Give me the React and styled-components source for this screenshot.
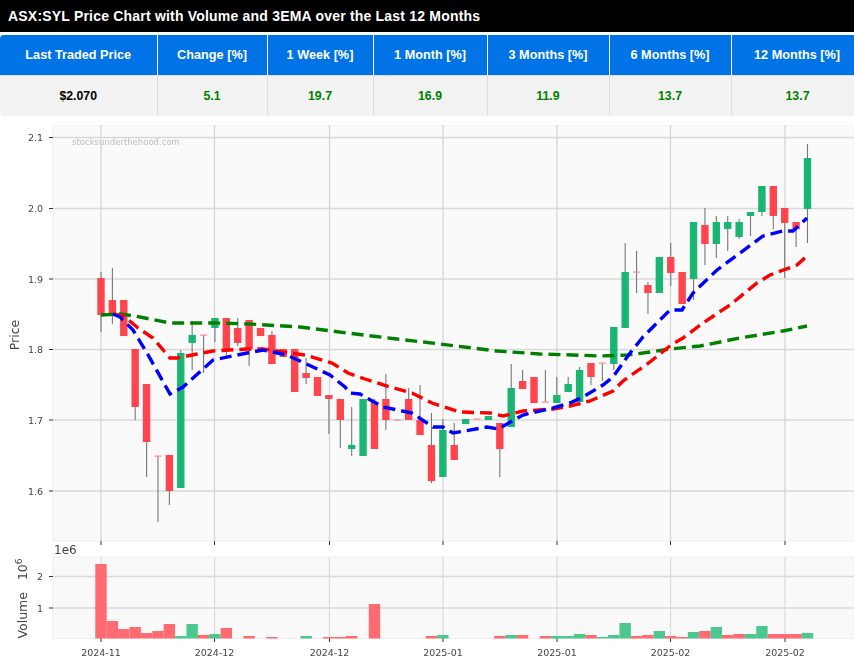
import React from "react";
import styled, { createGlobalStyle } from "styled-components";

const Global = createGlobalStyle`
  html, body { margin: 0; padding: 0; background: #fff; overflow: hidden; }
  body { font-family: "Liberation Sans", Arial, sans-serif; }
`;

const Page = styled.div`
  width: 854px;
  height: 663px;
  display: flex;
  flex-direction: column;
  overflow: hidden;
`;

const TitleBar = styled.h1`
  margin: 0 0 3px;
  height: 32px;
  padding: 0 8px;
  display: flex;
  align-items: center;
  background: #000;
  color: #fff;
  font-size: 14px;
  font-weight: 700;
  letter-spacing: 0.2px;
  white-space: nowrap;
`;

const Table = styled.div`
  display: grid;
  width: 863.5px;
  grid-template-columns: 157.5px 110px 106px 114px 122px 122px 132px;
  grid-auto-rows: 40.5px;
  margin-bottom: 9px;
  border-radius: 4px 0 0 4px;
  overflow: hidden;
  font-size: 12.7px;
  font-weight: 700;
`;

const HeadCell = styled.div`
  display: flex;
  align-items: center;
  justify-content: center;
  background: #0073e6;
  color: #fff;
  border-right: 1px solid #fff;
  border-bottom: 1px solid #ddd;
  &:last-of-type { border-right: 0; }
`;

const ValueCell = styled.div`
  display: flex;
  align-items: center;
  justify-content: center;
  background: #f2f2f2;
  color: ${(p) => (p.$price ? "#000" : "#008000")};
  border-right: 1px solid #ddd;
  font-size: 12.3px;
  &:last-child { border-right: 0; }
`;

const ChartFigure = styled.svg`
  display: block;
  flex: none;
  width: 854px;
  height: 538px;
  filter: blur(0.35px);
`;

const headers = ["Last Traded Price", "Change [%]", "1 Week [%]", "1 Month [%]", "3 Months [%]", "6 Months [%]", "12 Months [%]"];
const values = ["$2.070", "5.1", "19.7", "16.9", "11.9", "13.7", "13.7"];

const TOP = 125;
const RED = "#ff4048";
const GREEN = "#12b56e";
const xOf = (i) => 101 + i * 11.395;

// [color, bodyTop, bodyBottom, wickTop, wickBottom] in page pixels
const candles = [
  ["r", 278, 315, 272, 332], ["r", 300, 315, 268, 324], ["r", 300, 336], ["r", 349, 407, 349, 420],
  ["r", 384, 442, 384, 477], ["d", 456, 456, 456, 522], ["r", 455, 491, 455, 505], ["g", 353, 488, 350, 488],
  ["g", 335, 343, 321, 370], ["d", 335, 335, 335, 373], ["g", 318, 328, 318, 342], ["r", 318, 349, 318, 358],
  ["r", 328, 343, 318, 346], ["r", 320, 349, 320, 366], ["r", 328, 336], ["r", 335, 364, 331, 364],
  ["r", 349, 357], ["r", 349, 392], ["r", 373, 378, 358, 384], ["r", 377, 396],
  ["r", 395, 399, 395, 434], ["r", 399, 420, 399, 448], ["g", 445, 449, 407, 456], ["g", 399, 456],
  ["r", 402, 449, 399, 449], ["r", 399, 420, 374, 430], ["d", 420, 420], ["r", 399, 420, 388, 420],
  ["r", 420, 435, 385, 435], ["r", 445, 481, 413, 483], ["g", 430, 477, 419, 477], ["r", 445, 460, 423, 460],
  ["g", 419, 424], ["d", 419, 419], ["g", 416, 420], ["r", 423, 449, 423, 477],
  ["g", 388, 427, 364, 427], ["r", 381, 389, 370, 389], ["r", 377, 403], ["d", 402, 402, 370, 402],
  ["g", 395, 403, 377, 403], ["g", 384, 392, 377, 392], ["g", 370, 402, 367, 406], ["r", 363, 377, 363, 385],
  ["d", 363, 363, 363, 381], ["g", 327, 364, 327, 370], ["g", 272, 328, 243, 328], ["d", 272, 272, 251, 293],
  ["r", 285, 293, 282, 314], ["g", 257, 293], ["r", 257, 273, 243, 286], ["r", 272, 304],
  ["g", 222, 279, 222, 300], ["r", 225, 244, 208, 265], ["g", 222, 244, 216, 258], ["g", 222, 229, 216, 251],
  ["g", 222, 237, 219, 239], ["g", 212, 216, 212, 236], ["g", 186, 212, 186, 216], ["r", 186, 216, 186, 229],
  ["r", 208, 223, 208, 278], ["r", 222, 229, 222, 247], ["g", 158, 209, 144, 243],
];

const volumes = [
  [0, "r", 564], [1, "r", 621], [2, "r", 629], [3, "r", 627], [4, "r", 633], [5, "r", 631], [6, "r", 624],
  [7, "g", 636], [8, "g", 624], [9, "r", 635], [10, "g", 634], [11, "r", 628], [13, "r", 636], [15, "r", 637],
  [18, "g", 636], [20, "r", 637], [21, "r", 637], [22, "r", 636], [24, "r", 604], [29, "r", 636], [30, "g", 635],
  [35, "r", 636], [36, "g", 635], [37, "r", 635], [39, "r", 636], [40, "g", 636], [41, "g", 636], [42, "g", 634],
  [43, "r", 635], [44, "g", 637], [45, "g", 635], [46, "g", 623], [47, "r", 636], [48, "r", 635], [49, "g", 631],
  [50, "r", 636], [51, "r", 637], [52, "g", 632], [53, "r", 631], [54, "g", 627], [55, "r", 635], [56, "r", 634],
  [57, "g", 634], [58, "g", 626], [59, "r", 634], [60, "r", 634], [61, "r", 634], [62, "g", 633],
];

const blueLine = [[113,314],[120,317],[133,330],[147,353],[170,394],[183,387],[213,360],[247,353],[263,350],[287,355],[300,361],[330,375],[345,387],[350,393],[360,394],[383,407],[412,413],[433,427],[443,427],[453,433],[487,427],[498,429],[523,415],[553,408],[570,403],[583,397],[603,385],[613,377],[630,353],[643,337],[660,320],[670,310],[682,310],[693,293],[717,270],[740,253],[763,236],[783,231],[793,231],[807,218]];
const redLine = [[113,314],[124,316],[138,328],[153,338],[170,358],[177,358],[197,354],[213,351],[247,349],[263,349],[277,351],[290,353],[305,355],[332,363],[348,373],[365,379],[390,387],[412,393],[432,403],[460,412],[490,413],[503,416],[523,411],[553,409],[570,406],[590,401],[613,391],[623,381],[650,362],[671,345],[683,338],[703,323],[730,305],[757,283],[770,275],[797,265],[807,256]];
const greenLine = [[101,315],[120,314],[135,316],[150,319],[170,323],[192,323],[215,323],[250,324],[300,327],[347,333],[397,339],[440,344],[497,351],[540,354],[573,355],[600,356],[628,355],[650,352],[670,349],[700,346],[740,338],[783,331],[807,326]];

const gridX = [
  [101, "2024-11"], [214.5, "2024-12"], [329.5, "2024-12"], [443, "2025-01"],
  [557, "2025-01"], [670.5, "2025-02"], [785, "2025-02"],
];
const priceTicks = [["2.1", 137.5], ["2.0", 208.5], ["1.9", 279], ["1.8", 349.5], ["1.7", 420], ["1.6", 491]];
const volumeTicks = [["2", 576.5], ["1", 608]];

const points = (line) => line.map(([x, y]) => `${x},${y}`).join(" ");
const tickText = { fontFamily: "'DejaVu Sans', sans-serif", fontSize: 9.5, fill: "#444" };
const labelText = { fontFamily: "'DejaVu Sans', sans-serif", fontSize: 12.5, fill: "#444" };

function Chart() {
  return (
    <ChartFigure viewBox={`0 ${TOP} 854 538`}>
      <rect x="53" y="125" width="801" height="416" fill="#fafafa" stroke="#eee" />
      <rect x="53" y="557" width="801" height="81.5" fill="#f9f9f9" stroke="#eee" />

      {priceTicks.map(([t, y]) => (
        <g key={t}>
          <line x1="53" x2="854" y1={y} y2={y} stroke="#d9d9d9" strokeWidth="1.3" />
          <line x1="49" x2="53" y1={y} y2={y} stroke="#333" strokeWidth="1" />
          <text x="28" y={y + 3.5} {...tickText}>{t}</text>
        </g>
      ))}
      {volumeTicks.map(([t, y]) => (
        <g key={t}>
          <line x1="53" x2="854" y1={y} y2={y} stroke="#d9d9d9" strokeWidth="1.3" />
          <line x1="49" x2="53" y1={y} y2={y} stroke="#333" strokeWidth="1" />
          <text x="37" y={y + 3.5} {...tickText}>{t}</text>
        </g>
      ))}
      {gridX.map(([x, label], i) => (
        <g key={i}>
          <line x1={x} x2={x} y1="125" y2="541" stroke="#d6d6d6" strokeWidth="1.3" />
          <line x1={x} x2={x} y1="541" y2="545" stroke="#333" strokeWidth="1" />
          <line x1={x} x2={x} y1="557" y2="638" stroke="#dcdcdc" strokeWidth="1.3" />
          <line x1={x} x2={x} y1="638" y2="642" stroke="#333" strokeWidth="1" />
          <text x={x} y="656" textAnchor="middle" {...tickText}>{label}</text>
        </g>
      ))}

      <text x="72" y="145" fontFamily="'DejaVu Sans', sans-serif" fontSize="8.5" fill="#bdbdbd">stocksunderthehood.com</text>
      <text transform="translate(19 335) rotate(-90)" textAnchor="middle" {...labelText}>Price</text>
      <text x="54" y="554" {...labelText} fontSize="12">1e6</text>
      <text transform="translate(27 598.5) rotate(-90)" textAnchor="middle" {...labelText} xmlSpace="preserve">
        Volume   10<tspan dy="-5" fontSize="9">6</tspan>
      </text>

      {candles.map(([c, top, bottom, wt, wb], i) => {
        const x = xOf(i);
        const fill = c === "g" ? GREEN : RED;
        return (
          <g key={i}>
            {wt !== undefined && <line x1={x} x2={x} y1={wt} y2={wb} stroke="#777" strokeWidth="1.1" />}
            {c === "d" ? (
              <rect x={x - 3.5} y={top - 0.5} width="7" height="1.2" fill="#ff8a8e" />
            ) : (
              <rect x={x - 3.7} y={top} width="7.4" height={bottom - top} fill={fill} fillOpacity="0.97" />
            )}
          </g>
        );
      })}

      <polyline points={points(greenLine)} fill="none" stroke="#008000" strokeWidth="3.4" strokeDasharray="12 6" />
      <polyline points={points(redLine)} fill="none" stroke="#ff0000" strokeWidth="3.4" strokeDasharray="12 6" />
      <polyline points={points(blueLine)} fill="none" stroke="#0000ff" strokeWidth="3.4" strokeDasharray="12 6" />

      {volumes.map(([i, c, top]) => (
        <rect
          key={i}
          x={xOf(i) - 5.7}
          y={top}
          width="11.4"
          height={638.5 - top}
          fill={c === "g" ? "#4cc78e" : "#ff6b71"}
        />
      ))}
    </ChartFigure>
  );
}

export default function App() {
  return (
    <Page>
      <Global />
      <TitleBar>ASX:SYL Price Chart with Volume and 3EMA over the Last 12 Months</TitleBar>
      <Table>
        {headers.map((h) => (
          <HeadCell key={h}>{h}</HeadCell>
        ))}
        {values.map((v, i) => (
          <ValueCell key={i} $price={i === 0}>{v}</ValueCell>
        ))}
      </Table>
      <Chart />
    </Page>
  );
}
